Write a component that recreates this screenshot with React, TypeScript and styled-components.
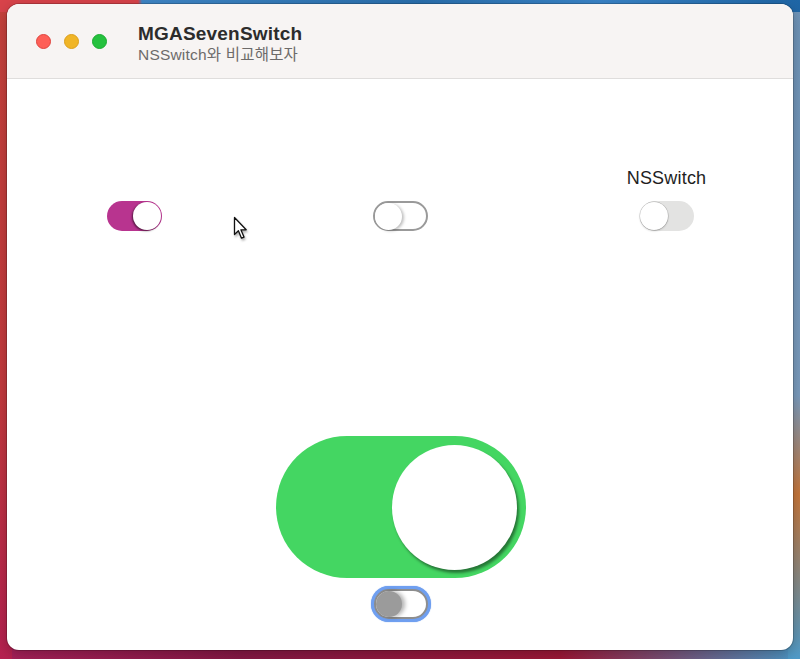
import styled, { createGlobalStyle, css } from 'styled-components';

const GlobalStyle = createGlobalStyle`
  html, body {
    margin: 0;
    padding: 0;
  }
  body {
    width: 800px;
    height: 659px;
    overflow: hidden;
    font-family: 'Liberation Sans', 'Noto Sans CJK KR', sans-serif;
  }
`;

type Variant = 'pink' | 'outline' | 'native' | 'green' | 'focus';

type SwitchProps = {
  variant: Variant;
  on?: boolean;
};

const Switch: React.FC<SwitchProps> = ({ variant, on }) => {
  const track = (
    <Track variant={variant} role="switch" aria-checked={!!on}>
      <Knob variant={variant} on={!!on} />
    </Track>
  );
  return variant === 'focus' ? <FocusRing>{track}</FocusRing> : track;
};

const Cursor = () => (
  <CursorWrap width="17" height="25" viewBox="0 0 17 25">
    <path d="M1.5 1.5 L1.5 18.5 L5.4 14.8 L8.5 22.2 L11 21.1 L7.9 13.8 L13.2 13.8 Z" fill="#fff" stroke="#111" strokeWidth="1.3" strokeLinejoin="round" />
  </CursorWrap>
);

const App = () => {
  return (
    <>
      <GlobalStyle />
      <Desktop>
        <Window>
          <TitleBar>
            <Lights>
              <Light color="#fe5f57" border="#e0443e" />
              <Light color="#f0b527" border="#dc9f1c" />
              <Light color="#25c13e" border="#1aab2f" />
            </Lights>
            <Titles>
              <Title>MGASevenSwitch</Title>
              <Subtitle>NSSwitch와 비교해보자</Subtitle>
            </Titles>
          </TitleBar>

          <Content>
            <SwitchRow>
              <SwitchCell>
                <Switch variant="pink" on />
              </SwitchCell>
              <SwitchCell>
                <Switch variant="outline" />
              </SwitchCell>
              <SwitchCell>
                <Label>NSSwitch</Label>
                <Switch variant="native" />
              </SwitchCell>
            </SwitchRow>

            <BigArea>
              <Switch variant="green" on />
              <Switch variant="focus" />
            </BigArea>

            <Cursor />
          </Content>
        </Window>
      </Desktop>
    </>
  );
};

const Desktop = styled.div`
  width: 800px;
  height: 659px;
  box-sizing: border-box;
  padding: 4px 7px 9px 7px;
  background:
    linear-gradient(90deg, #d8434a 0, #d8434a 138px, #3f86c6 142px, #2a6fad 420px, #3a84c8 600px, #1f66a6 800px) top / 100% 12px no-repeat,
    linear-gradient(180deg, #c6423c 0, #c43a3e 60%, #b62150 100%) left / 12px 100% no-repeat,
    linear-gradient(180deg, #6f94b8 0, #7b9cbe 60%, #c7773b 75%, #4f9bc9 100%) right / 12px 100% no-repeat,
    linear-gradient(90deg, #a8215a 0, #871846 30%, #9e1838 70%, #4c98c6 100%);
`;

const Window = styled.div`
  display: flex;
  flex-direction: column;
  height: 100%;
  border-radius: 12px;
  overflow: hidden;
  background: #ffffff;
  box-shadow: 0 0 0 1px rgba(0, 0, 0, 0.18), 0 4px 14px rgba(0, 0, 0, 0.25);
`;

const TitleBar = styled.div`
  display: flex;
  align-items: center;
  gap: 31px;
  height: 74px;
  flex-shrink: 0;
  padding-left: 29px;
  background: #f7f4f3;
  border-bottom: 1px solid #dfdddc;
`;

const Lights = styled.div`
  display: flex;
  gap: 13px;
  margin-top: 1px;
`;

const Light = styled.span<{ color: string; border: string }>`
  width: 15px;
  height: 15px;
  border-radius: 50%;
  box-sizing: border-box;
  background: ${({ color }) => color};
  border: 1px solid ${({ border }) => border};
`;

const Titles = styled.div`
  display: flex;
  flex-direction: column;
  gap: 1px;
  margin-top: 4px;
`;

const Title = styled.div`
  font-size: 19px;
  font-weight: 700;
  line-height: 22px;
  color: #2c2c2c;
  letter-spacing: 0.2px;
`;

const Subtitle = styled.div`
  font-size: 15.5px;
  line-height: 18px;
  color: #6d6b6a;
  letter-spacing: 0.2px;
`;

const Content = styled.div`
  position: relative;
  flex: 1;
  display: flex;
  flex-direction: column;
  align-items: center;
  padding-top: 89px;
`;

const SwitchRow = styled.div`
  display: flex;
  align-items: flex-end;
  justify-content: center;
  gap: 211px;
  margin-left: 1px;
`;

const SwitchCell = styled.div`
  display: flex;
  flex-direction: column;
  align-items: center;
  gap: 12px;
  width: 55px;
`;

const Label = styled.div`
  font-size: 18px;
  line-height: 21px;
  color: #1e1e1e;
  white-space: nowrap;
  letter-spacing: 0.2px;
`;

const BigArea = styled.div`
  display: flex;
  flex-direction: column;
  align-items: center;
  gap: 8px;
  margin-top: 205px;
  margin-left: 2px;
`;

const trackCss: Record<Variant, ReturnType<typeof css>> = {
  pink: css`
    width: 55px;
    height: 30px;
    background: #b8348f;
  `,
  outline: css`
    width: 55px;
    height: 30px;
    background: #ffffff;
    border: 2px solid #9a9a9a;
  `,
  native: css`
    width: 54px;
    height: 30px;
    background: #e3e3e2;
  `,
  green: css`
    width: 250px;
    height: 142px;
    background: #44d662;
  `,
  focus: css`
    width: 54px;
    height: 30px;
    background: #ffffff;
    border: 2px solid #8e8e8e;
  `,
};

const Track = styled.div<{ variant: Variant }>`
  position: relative;
  box-sizing: border-box;
  border-radius: 999px;
  flex-shrink: 0;
  ${({ variant }) => trackCss[variant]}
`;

const knobCss: Record<Variant, ReturnType<typeof css>> = {
  pink: css`
    width: 28px;
    height: 28px;
    top: 1px;
    background: #ffffff;
    box-shadow: -1px 1px 2px rgba(0, 0, 0, 0.55);
  `,
  outline: css`
    width: 27px;
    height: 27px;
    top: 0;
    background: #ffffff;
    box-shadow: 2px 1px 3px rgba(0, 0, 0, 0.25);
  `,
  native: css`
    width: 28px;
    height: 28px;
    top: 1px;
    background: #ffffff;
    box-shadow: 0 0 0 0.5px rgba(0, 0, 0, 0.22), 0 1px 2px rgba(0, 0, 0, 0.2);
  `,
  green: css`
    width: 125px;
    height: 125px;
    top: 9px;
    background: #ffffff;
    box-shadow: 2px 3px 3px rgba(0, 0, 0, 0.45);
  `,
  focus: css`
    width: 26px;
    height: 26px;
    top: 0;
    background: #9b9b9b;
    box-shadow: 3px 0 4px rgba(0, 0, 0, 0.3);
  `,
};

const Knob = styled.span<{ variant: Variant; on: boolean }>`
  position: absolute;
  border-radius: 50%;
  ${({ variant }) => knobCss[variant]}
  ${({ on, variant }) => (on ? `right: ${variant === 'green' ? 9 : 1}px;` : 'left: 0;')}
`;

const FocusRing = styled.div`
  padding: 3px;
  border-radius: 999px;
  background: #6f9ff0;
  box-shadow: 0 0 1px #5a8ee8;
`;

const CursorWrap = styled.svg`
  position: absolute;
  left: 226px;
  top: 137px;
  filter: drop-shadow(1px 2px 1px rgba(0, 0, 0, 0.3));
`;

export default App;
